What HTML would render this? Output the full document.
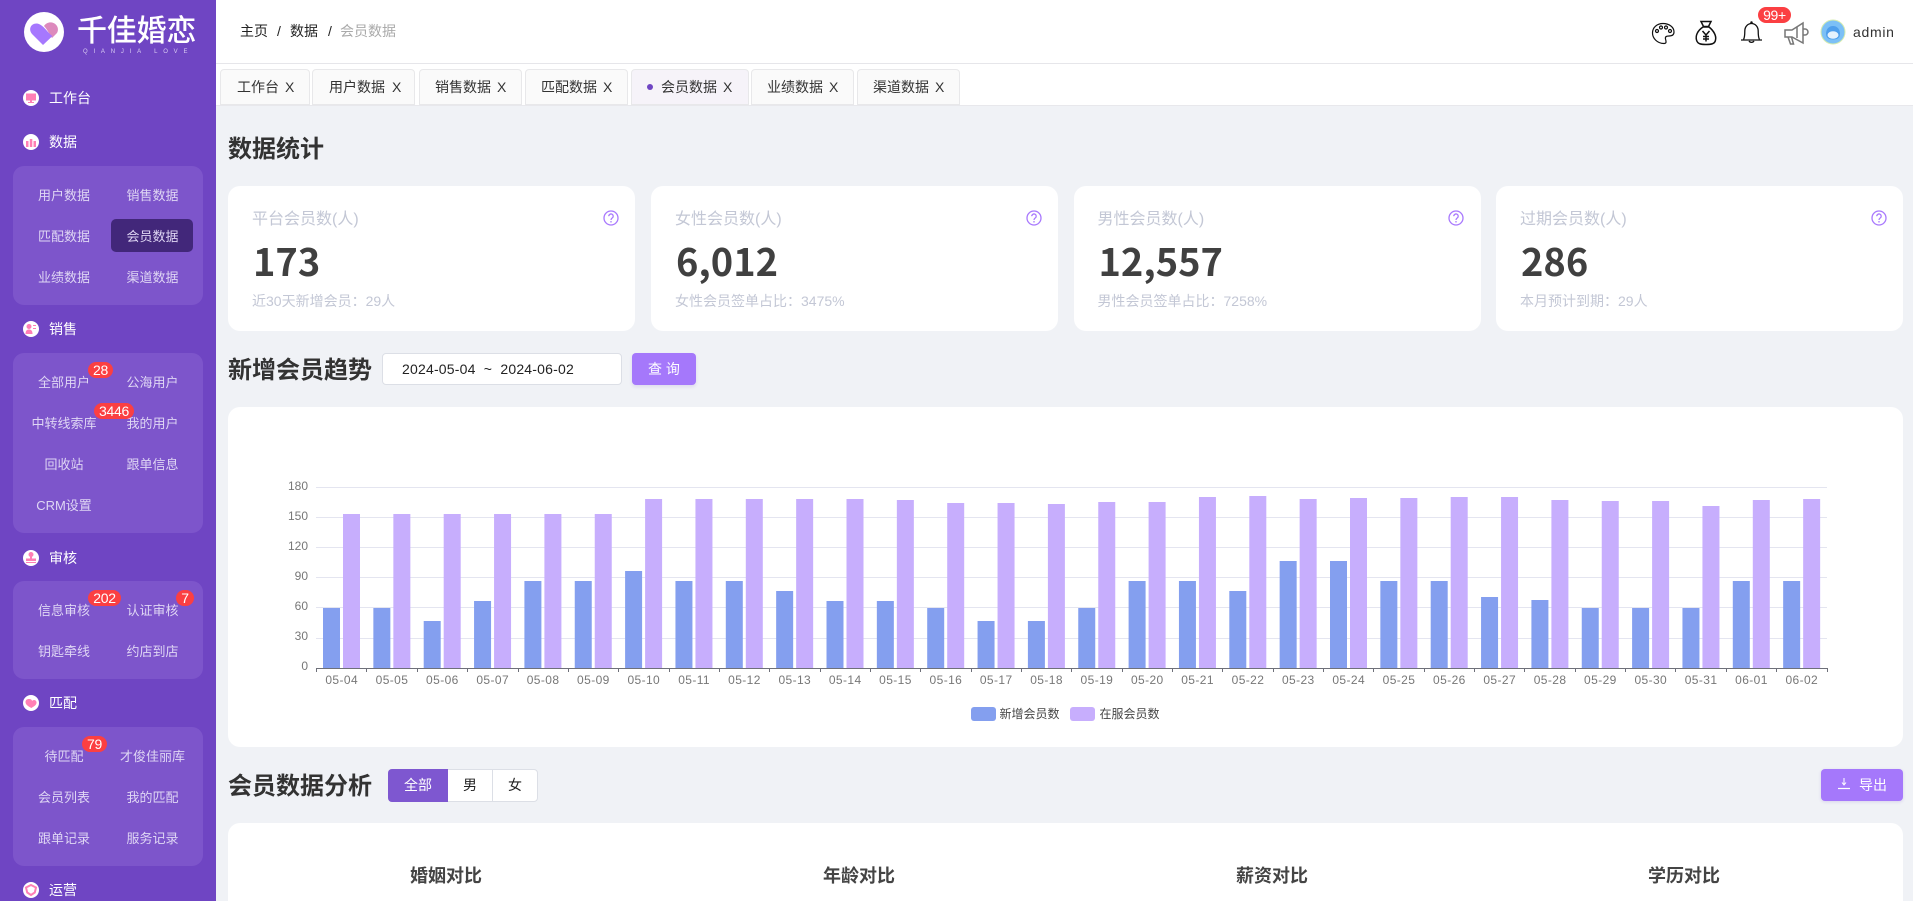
<!DOCTYPE html>
<html lang="zh-CN">
<head>
<meta charset="utf-8">
<title>千佳婚恋 - 会员数据</title>
<style>
html,body{margin:0;padding:0;width:1913px;height:901px;overflow:hidden;background:#f0f2f6;font-family:"Liberation Sans","Noto Sans CJK SC",sans-serif;color:#333}
*{box-sizing:border-box}
#root{position:relative;width:1913px;height:901px;overflow:hidden;background:#f0f2f6}
.a{position:absolute;white-space:nowrap}
#side{position:absolute;left:0;top:0;width:216px;height:901px;background:#6f45c3;overflow:hidden}
.blk{position:absolute;left:13px;width:190px;background:#7d55cb;border-radius:11px}
.h{position:absolute;left:49px;font-size:14px;line-height:20px;color:#fff;white-space:nowrap}
.s{position:absolute;margin-top:1px;width:88px;text-align:center;font-size:13px;line-height:20px;color:#dfd6f4;white-space:nowrap}
.l{left:20px}.r{left:108.5px}
.b{position:absolute;height:16px;border-radius:8px;background:#fb3f42;color:#fff;font-size:14px;letter-spacing:-.3px;line-height:16px;text-align:center}
.act{position:absolute;left:111px;top:219px;width:82px;height:33px;background:#42277a;border-radius:5px}
.tab{position:absolute;top:69px;height:36px;background:#fafafa;border:1px solid #e8e8ea;border-bottom:1px solid #e8e8ea;border-radius:4px 4px 0 0}
.t{position:absolute;top:78px;font-size:14px;line-height:18px;color:#333;white-space:nowrap}
.card{position:absolute;top:186px;height:145px;width:407px;background:#fff;border-radius:12px}
.lab{position:absolute;left:24px;top:24px;font-size:16px;line-height:20px;color:#c3c7d5;white-space:nowrap}
.num{position:absolute;left:25px;top:50px;font-family:"Noto Sans CJK SC","Liberation Sans",sans-serif;font-weight:700;font-size:38px;line-height:48px;color:#404040;white-space:nowrap}
.sub{position:absolute;left:24px;top:105px;font-size:14px;line-height:20px;color:#c3c7d5;white-space:nowrap}
.title{position:absolute;left:228px;font-size:24px;line-height:32px;font-weight:700;color:#333;white-space:nowrap;font-family:"Liberation Sans","Noto Sans CJK SC",sans-serif}
.pie{position:absolute;top:864px;font-size:18px;line-height:24px;font-weight:700;color:#444;width:120px;text-align:center}
</style>
</head>
<body>
<div id="root">
<!-- Sidebar -->
<div id="side">
  <svg class="a" style="left:0;top:0" width="216" height="901" viewBox="0 0 216 901">
    <circle cx="44" cy="32" r="20" fill="#fff"/>
    <g transform="translate(0,-1)">
    <path d="M44 27C46 24 49 23 52 23.500C57 24.500 59.500 30 57 34L52 39C50 36 47 30 44 27Z" fill="#dd8abd"/>
    <path d="M43 46L32 35C28 30 31 24.500 36.500 24.500C40 24.500 44 28 48 33C51 36 52 37 52.500 37Z" fill="#a678fe"/>
    </g>
    <g fill="#fff">
      <circle cx="31" cy="98" r="8"/><circle cx="31" cy="142" r="8"/><circle cx="31" cy="329" r="8"/>
      <circle cx="31" cy="558" r="8"/><circle cx="31" cy="703" r="8"/><circle cx="31" cy="890" r="8"/>
    </g>
    <g fill="#ff7fb5">
      <path d="M26 93.500h10v7h-4v1.500h2v1h-6v-1h2v-1.500h-4z"/>
      <path d="M26 141h2.500v6h-2.500zM29.800 139h2.500v8h-2.500zM33.500 141h2.500v6h-2.500z"/>
      <circle cx="29" cy="326.500" r="2.500"/><path d="M25.500 334c0-3.500 1.500-4.500 3.500-4.500s3.500 1 3.500 4.500z"/><path d="M33 325h3v1h-3zM33 328h3v1h-3z"/>
      <circle cx="31" cy="554.500" r="2.500"/><path d="M30 556h2v2.500h4v2.500h-10v-2.500h4zM26 562h10v1h-10z"/>
      <path d="M29 699c2 0 3 1 3 2c1-1.500 4-1.500 4.500 1c.5 3-3 4.500-5 6c-2-1-6-3-6-6c0-2 1.500-3 3.500-3z"/>
      <path d="M31 885l5 2.500-1.200 5-3.800 2.500-3.800-2.500-1.200-5z" fill="none" stroke="#ff7fb5" stroke-width="2"/>
    </g>
  </svg>
  <div class="a" style="left:77px;top:11px;font-size:30px;line-height:42px;font-weight:500;letter-spacing:-.2px;color:#fff;font-family:'Liberation Sans','Noto Sans CJK SC',sans-serif">千佳婚恋</div>
  <div class="a" style="left:83px;top:48px;font-size:6px;line-height:9px;letter-spacing:5.800px;color:#d9ccf3">QIANJIA LOVE</div>

  <div class="h" style="top:88px">工作台</div>
  <div class="h" style="top:132px">数据</div>
  <div class="blk" style="top:166px;height:139px"></div>
  <div class="act"></div>
  <div class="s l" style="top:185px">用户数据</div><div class="s r" style="top:185px">销售数据</div>
  <div class="s l" style="top:226px">匹配数据</div><div class="s r" style="top:226px">会员数据</div>
  <div class="s l" style="top:267px">业绩数据</div><div class="s r" style="top:267px">渠道数据</div>

  <div class="h" style="top:319px">销售</div>
  <div class="blk" style="top:353px;height:180px"></div>
  <div class="s l" style="top:372px">全部用户</div><div class="s r" style="top:372px">公海用户</div>
  <div class="s l" style="top:413px">中转线索库</div><div class="s r" style="top:413px">我的用户</div>
  <div class="s l" style="top:454px">回收站</div><div class="s r" style="top:454px">跟单信息</div>
  <div class="s l" style="top:495px">CRM设置</div>
  <div class="b" style="left:88px;top:362px;width:25px">28</div>
  <div class="b" style="left:94px;top:403px;width:40px">3446</div>

  <div class="h" style="top:548px">审核</div>
  <div class="blk" style="top:581px;height:98px"></div>
  <div class="s l" style="top:600px">信息审核</div><div class="s r" style="top:600px">认证审核</div>
  <div class="s l" style="top:641px">钥匙牵线</div><div class="s r" style="top:641px">约店到店</div>
  <div class="b" style="left:88px;top:590px;width:33px">202</div>
  <div class="b" style="left:176px;top:590px;width:18px">7</div>

  <div class="h" style="top:693px">匹配</div>
  <div class="blk" style="top:727px;height:139px"></div>
  <div class="s l" style="top:746px">待匹配</div><div class="s r" style="top:746px">才俊佳丽库</div>
  <div class="s l" style="top:787px">会员列表</div><div class="s r" style="top:787px">我的匹配</div>
  <div class="s l" style="top:828px">跟单记录</div><div class="s r" style="top:828px">服务记录</div>
  <div class="b" style="left:82px;top:736px;width:25px">79</div>

  <div class="h" style="top:880px">运营</div>
</div>

<!-- Header -->
<div class="a" style="left:216px;top:0;width:1697px;height:64px;background:#fff;border-bottom:1px solid #e6e6ea"></div>
<div class="a" style="left:216px;top:64px;width:1697px;height:42px;background:#fff;border-bottom:1px solid #e8e8ec"></div>
<div class="a" style="left:240px;top:22px;font-size:14px;line-height:18px;color:#222">主页</div>
<div class="a" style="left:277px;top:22px;font-size:14px;line-height:18px;color:#222">/</div>
<div class="a" style="left:290px;top:22px;font-size:14px;line-height:18px;color:#222">数据</div>
<div class="a" style="left:328px;top:22px;font-size:14px;line-height:18px;color:#222">/</div>
<div class="a" style="left:340px;top:22px;font-size:14px;line-height:18px;color:#aaa">会员数据</div>

<svg class="a" style="left:1640px;top:0" width="273" height="64" viewBox="1640 0 273 64">
  <g fill="none" stroke="#111" stroke-width="1.200">
    <path d="M1663 23.500C1669 23.500 1674 27 1674 32C1674 35 1672 36 1669 36C1666 36 1665 37 1665.500 39C1666 41 1667 43.500 1664 43.500C1657 43.500 1652.500 38 1652.500 33C1652.500 27.500 1657 23.500 1663 23.500Z"/>
    <circle cx="1657" cy="31" r="1.500"/><circle cx="1661" cy="27.500" r="1.500"/><circle cx="1666" cy="27.500" r="1.500"/><circle cx="1670" cy="31" r="1.500"/>
  </g>
  <g fill="none" stroke="#111" stroke-width="1.500">
    <path d="M1701 21.500h10l-2.500 5h-5z"/>
    <path d="M1703 27C1697 31 1695.500 36 1696.500 40C1697.500 44 1701 44.500 1706 44.500C1711 44.500 1715 44 1715.500 40C1716.500 36 1714 31 1709 27Z"/>
    <path d="M1702.500 31l3.500 4l3.500-4M1706 35v6.500M1703 36.500h6M1703 39h6"/>
  </g>
  <g fill="none" stroke="#111" stroke-width="1.300">
    <path d="M1743.500 39.500C1744.500 38 1744.800 34 1744.800 31C1744.800 26.500 1748 23.500 1751.500 23.500C1755 23.500 1758.200 26.500 1758.200 31C1758.200 34 1758.500 38 1759.500 39.500"/>
    <path d="M1741 40h21"/>
    <path d="M1749 41a3 3 0 0 0 5 0"/>
    <circle cx="1751.500" cy="22.500" r=".6"/>
  </g>
  <g fill="none" stroke="#777" stroke-width="1.500">
    <path d="M1785 30h7l11-7v20l-11-6h-7z"/>
    <path d="M1788 37l2.500 7h3l-2-7"/>
    <path d="M1803 29h2a3 3 0 0 1 0 6h-2"/>
    <path d="M1797 27v11"/>
  </g>
  <circle cx="1833" cy="32" r="12" fill="#7cc0f6" stroke="#d6ecb0" stroke-width="1"/>
  <path d="M1826 34C1826 29 1829 26 1833 26C1837 26 1840 29 1840 34C1840 38 1837 39.500 1833 39.500C1829 39.500 1826 38 1826 34Z" fill="#4f9fec"/>
  <ellipse cx="1833" cy="35" rx="5.500" ry="3.800" fill="#e6f2fd"/>
</svg>
<div class="b" style="left:1758px;top:7px;width:33px">99+</div>
<div class="a" style="left:1853px;top:22px;font-size:14px;line-height:20px;letter-spacing:.7px;color:#333">admin</div>

<!-- Tabs -->
<div class="tab" style="left:220px;width:90px"></div><div class="t" style="left:237px">工作台</div><div class="t" style="left:285px">X</div>
<div class="tab" style="left:312px;width:103px"></div><div class="t" style="left:329px">用户数据</div><div class="t" style="left:392px">X</div>
<div class="tab" style="left:419px;width:103px"></div><div class="t" style="left:435px">销售数据</div><div class="t" style="left:497px">X</div>
<div class="tab" style="left:525px;width:103px"></div><div class="t" style="left:541px">匹配数据</div><div class="t" style="left:603px">X</div>
<div class="tab" style="left:631px;width:118px;background:#f6f3f9"></div><div class="a" style="left:647px;top:84px;width:6px;height:6px;border-radius:50%;background:#6f45c3"></div><div class="t" style="left:661px">会员数据</div><div class="t" style="left:723px">X</div>
<div class="tab" style="left:751px;width:103px"></div><div class="t" style="left:767px">业绩数据</div><div class="t" style="left:829px">X</div>
<div class="tab" style="left:857px;width:103px"></div><div class="t" style="left:873px">渠道数据</div><div class="t" style="left:935px">X</div>

<!-- Stats -->
<div class="title" style="top:134px">数据统计</div>

<div class="card" style="left:228px">
  <div class="lab">平台会员数(人)</div><div class="num">173</div><div class="sub">近30天新增会员：29人</div>
  <svg class="a" style="left:375px;top:24px" width="16" height="16" viewBox="0 0 16 16"><circle cx="8" cy="8" r="7" fill="none" stroke="#a878fd" stroke-width="1.300"/><path d="M5.800 6.200a2.200 2.200 0 1 1 3.400 1.800c-.8.500-1.200 1-1.200 2" fill="none" stroke="#a878fd" stroke-width="1.300"/><circle cx="8" cy="11.800" r=".8" fill="#a878fd"/></svg>
</div>
<div class="card" style="left:651px">
  <div class="lab">女性会员数(人)</div><div class="num">6,012</div><div class="sub">女性会员签单占比：3475%</div>
  <svg class="a" style="left:375px;top:24px" width="16" height="16" viewBox="0 0 16 16"><circle cx="8" cy="8" r="7" fill="none" stroke="#a878fd" stroke-width="1.300"/><path d="M5.800 6.200a2.200 2.200 0 1 1 3.400 1.800c-.8.500-1.200 1-1.200 2" fill="none" stroke="#a878fd" stroke-width="1.300"/><circle cx="8" cy="11.800" r=".8" fill="#a878fd"/></svg>
</div>
<div class="card" style="left:1073.500px">
  <div class="lab">男性会员数(人)</div><div class="num">12,557</div><div class="sub">男性会员签单占比：7258%</div>
  <svg class="a" style="left:374px;top:24px" width="16" height="16" viewBox="0 0 16 16"><circle cx="8" cy="8" r="7" fill="none" stroke="#a878fd" stroke-width="1.300"/><path d="M5.800 6.200a2.200 2.200 0 1 1 3.400 1.800c-.8.500-1.200 1-1.200 2" fill="none" stroke="#a878fd" stroke-width="1.300"/><circle cx="8" cy="11.800" r=".8" fill="#a878fd"/></svg>
</div>
<div class="card" style="left:1496px">
  <div class="lab">过期会员数(人)</div><div class="num">286</div><div class="sub">本月预计到期：29人</div>
  <svg class="a" style="left:375px;top:24px" width="16" height="16" viewBox="0 0 16 16"><circle cx="8" cy="8" r="7" fill="none" stroke="#a878fd" stroke-width="1.300"/><path d="M5.800 6.200a2.200 2.200 0 1 1 3.400 1.800c-.8.500-1.200 1-1.200 2" fill="none" stroke="#a878fd" stroke-width="1.300"/><circle cx="8" cy="11.800" r=".8" fill="#a878fd"/></svg>
</div>

<!-- Trend -->
<div class="title" style="top:355px">新增会员趋势</div>
<div class="a" style="left:382px;top:353px;width:240px;height:32px;background:#fff;border:1px solid #dcdfe6;border-radius:4px"></div>
<div class="a" style="left:402px;top:359px;font-size:14px;line-height:20px;color:#222;letter-spacing:.2px;white-space:pre">2024-05-04  ~  2024-06-02</div>
<div class="a" style="left:632px;top:353px;width:64px;height:32px;background:#a578fb;border-radius:4px;box-shadow:0 2px 3px rgba(120,90,200,.15);color:#fff;font-size:14px;line-height:32px;text-align:center;white-space:pre">查 询</div>

<div class="a" style="left:228px;top:407px;width:1675px;height:340px;background:#fff;border-radius:12px"></div>
<svg class="a" style="left:0;top:0" width="1913" height="760" viewBox="0 0 1913 760" font-family="Liberation Sans, Noto Sans CJK SC, sans-serif" font-size="12">
  <g stroke="#e4e5f0" stroke-width="1">
    <path d="M316 487.500H1827M316 517.500H1827M316 547.500H1827M316 577.500H1827M316 607.500H1827M316 638.500H1827"/>
  </g>
  <g fill="#777" text-anchor="end">
    <text x="308" y="490">180</text><text x="308" y="520">150</text><text x="308" y="550">120</text><text x="308" y="580">90</text><text x="308" y="610">60</text><text x="308" y="640">30</text><text x="308" y="670">0</text>
  </g>
  <g fill="#849fef">
    <rect x="323" y="608" width="17" height="60"/><rect x="373.350" y="608" width="17" height="60"/><rect x="423.700" y="621" width="17" height="47"/><rect x="474.050" y="601" width="17" height="67"/><rect x="524.400" y="581" width="17" height="87"/><rect x="574.750" y="581" width="17" height="87"/><rect x="625.100" y="571" width="17" height="97"/><rect x="675.450" y="581" width="17" height="87"/><rect x="725.800" y="581" width="17" height="87"/><rect x="776.150" y="591" width="17" height="77"/><rect x="826.500" y="601" width="17" height="67"/><rect x="876.850" y="601" width="17" height="67"/><rect x="927.200" y="608" width="17" height="60"/><rect x="977.550" y="621" width="17" height="47"/><rect x="1027.900" y="621" width="17" height="47"/><rect x="1078.250" y="608" width="17" height="60"/><rect x="1128.600" y="581" width="17" height="87"/><rect x="1178.950" y="581" width="17" height="87"/><rect x="1229.300" y="591" width="17" height="77"/><rect x="1279.650" y="561" width="17" height="107"/><rect x="1330" y="561" width="17" height="107"/><rect x="1380.350" y="581" width="17" height="87"/><rect x="1430.700" y="581" width="17" height="87"/><rect x="1481.050" y="597" width="17" height="71"/><rect x="1531.400" y="600" width="17" height="68"/><rect x="1581.750" y="608" width="17" height="60"/><rect x="1632.100" y="608" width="17" height="60"/><rect x="1682.450" y="608" width="17" height="60"/><rect x="1732.800" y="581" width="17" height="87"/><rect x="1783.150" y="581" width="17" height="87"/>
  </g>
  <g fill="#c7aefd">
    <rect x="343" y="514" width="17" height="154"/><rect x="393.350" y="514" width="17" height="154"/><rect x="443.700" y="514" width="17" height="154"/><rect x="494.050" y="514" width="17" height="154"/><rect x="544.400" y="514" width="17" height="154"/><rect x="594.750" y="514" width="17" height="154"/><rect x="645.100" y="499" width="17" height="169"/><rect x="695.450" y="499" width="17" height="169"/><rect x="745.800" y="499" width="17" height="169"/><rect x="796.150" y="499" width="17" height="169"/><rect x="846.500" y="499" width="17" height="169"/><rect x="896.850" y="500" width="17" height="168"/><rect x="947.200" y="503" width="17" height="165"/><rect x="997.550" y="503" width="17" height="165"/><rect x="1047.900" y="504" width="17" height="164"/><rect x="1098.250" y="502" width="17" height="166"/><rect x="1148.600" y="502" width="17" height="166"/><rect x="1198.950" y="497" width="17" height="171"/><rect x="1249.300" y="496" width="17" height="172"/><rect x="1299.650" y="499" width="17" height="169"/><rect x="1350" y="498" width="17" height="170"/><rect x="1400.350" y="498" width="17" height="170"/><rect x="1450.700" y="497" width="17" height="171"/><rect x="1501.050" y="497" width="17" height="171"/><rect x="1551.400" y="500" width="17" height="168"/><rect x="1601.750" y="501" width="17" height="167"/><rect x="1652.100" y="501" width="17" height="167"/><rect x="1702.450" y="506" width="17" height="162"/><rect x="1752.800" y="500" width="17" height="168"/><rect x="1803.150" y="499" width="17" height="169"/>
  </g>
  <path d="M316.500 668.500H1827.500" stroke="#6e7079" stroke-width="1"/>
  <path d="M316.500 668v4M366.500 668v4M417.500 668v4M467.500 668v4M518.500 668v4M568.500 668v4M618.500 668v4M669.500 668v4M719.500 668v4M769.500 668v4M820.500 668v4M870.500 668v4M920.500 668v4M971.500 668v4M1021.500 668v4M1071.500 668v4M1122.500 668v4M1172.500 668v4M1222.500 668v4M1273.500 668v4M1323.500 668v4M1373.500 668v4M1424.500 668v4M1474.500 668v4M1524.500 668v4M1575.500 668v4M1625.500 668v4M1675.500 668v4M1726.500 668v4M1776.500 668v4M1827.500 668v4" stroke="#6e7079" stroke-width="1"/>
  <g fill="#777" text-anchor="middle" letter-spacing=".4">
    <text x="341.700" y="684">05-04</text><text x="392" y="684">05-05</text><text x="442.400" y="684">05-06</text><text x="492.700" y="684">05-07</text><text x="543.100" y="684">05-08</text><text x="593.400" y="684">05-09</text><text x="643.800" y="684">05-10</text><text x="694.100" y="684">05-11</text><text x="744.500" y="684">05-12</text><text x="794.800" y="684">05-13</text><text x="845.200" y="684">05-14</text><text x="895.500" y="684">05-15</text><text x="945.900" y="684">05-16</text><text x="996.200" y="684">05-17</text><text x="1046.600" y="684">05-18</text><text x="1096.900" y="684">05-19</text><text x="1147.300" y="684">05-20</text><text x="1197.600" y="684">05-21</text><text x="1248" y="684">05-22</text><text x="1298.300" y="684">05-23</text><text x="1348.700" y="684">05-24</text><text x="1399" y="684">05-25</text><text x="1449.400" y="684">05-26</text><text x="1499.700" y="684">05-27</text><text x="1550.100" y="684">05-28</text><text x="1600.400" y="684">05-29</text><text x="1650.800" y="684">05-30</text><text x="1701.100" y="684">05-31</text><text x="1751.500" y="684">06-01</text><text x="1801.800" y="684">06-02</text>
  </g>
  <rect x="971" y="707" width="25" height="14" rx="3" fill="#849fef"/>
  <rect x="1070" y="707" width="25" height="14" rx="3" fill="#c7aefd"/>
  <text x="999.500" y="718" fill="#444">新增会员数</text>
  <text x="1099.500" y="718" fill="#444">在服会员数</text>
</svg>

<!-- Analysis -->
<div class="title" style="top:771px">会员数据分析</div>
<div class="a" style="left:388px;top:769px;width:150px;height:33px;background:#fff;border:1px solid #dcdfe6;border-radius:4px"></div>
<div class="a" style="left:388px;top:769px;width:60px;height:33px;background:#7e57d0;border-radius:4px 0 0 4px;color:#fff;font-size:14px;line-height:33px;text-align:center">全部</div>
<div class="a" style="left:448px;top:770px;width:45px;height:31px;border-right:1px solid #dcdfe6;color:#222;font-size:14px;line-height:31px;text-align:center">男</div>
<div class="a" style="left:493px;top:770px;width:44px;height:31px;color:#222;font-size:14px;line-height:31px;text-align:center">女</div>

<div class="a" style="left:1821px;top:769px;width:82px;height:32px;background:#a578fb;border-radius:4px;box-shadow:0 1px 3px rgba(120,90,200,.2)"></div>
<svg class="a" style="left:1836px;top:776px" width="16" height="16" viewBox="0 0 16 16"><path d="M8 2v6.500M6 6.500l2 2.500l2-2.500" fill="none" stroke="#fff" stroke-width="1"/><path d="M2 12.500h12" stroke="#fff" stroke-width="1.200"/></svg>
<div class="a" style="left:1859px;top:775px;font-size:14px;line-height:20px;color:#fff">导出</div>

<div class="a" style="left:228px;top:823px;width:1675px;height:78px;background:#fff;border-radius:12px 12px 0 0"></div>
<div class="pie" style="left:386px">婚姻对比</div>
<div class="pie" style="left:799px">年龄对比</div>
<div class="pie" style="left:1212px">薪资对比</div>
<div class="pie" style="left:1624px">学历对比</div>
</div>
</body>
</html>
